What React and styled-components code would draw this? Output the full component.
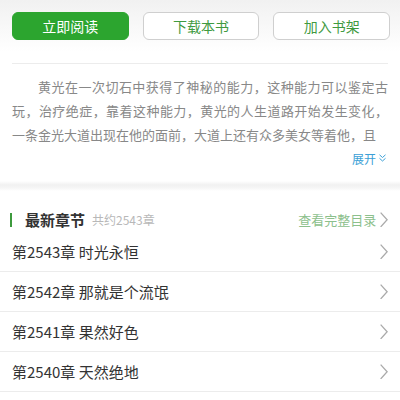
import React from "react";
import styled, { createGlobalStyle } from "styled-components";

const GlobalStyle = createGlobalStyle`
  * { box-sizing: border-box; }
  body {
    margin: 0;
    background: #fff;
    font-family: "Microsoft YaHei", "Noto Sans CJK SC", "Liberation Sans", sans-serif;
  }
`;

const Page = styled.div`
  width: 400px;
  height: 400px;
  overflow: hidden;
  background: #fff;
`;

const Top = styled.div`
  background: linear-gradient(#f1f1f1, #fff 52px);
  padding: 12px 12px 0 12px;
`;

const ButtonRow = styled.div`
  display: flex;
  gap: 14px;
  margin-right: -2px;
`;

const ActionButton = styled.div`
  flex: 1;
  height: 28px;
  display: flex;
  align-items: center;
  justify-content: center;
  border-radius: 6px;
  font-size: 14px;
  color: ${(p) => (p.primary ? "#fff" : "#3f9a3f")};
  background: ${(p) => (p.primary ? "#2ca52f" : "#fff")};
  border: 1px solid ${(p) => (p.primary ? "#2ca52f" : "#cfcfcf")};
`;

const Intro = styled.div`
  margin-top: 23px;
  border-top: 1px solid #ececec;
  padding-top: 11px;
`;

const Desc = styled.p`
  margin: 0;
  font-size: 13px;
  line-height: 24px;
  color: #888;
  text-indent: 2em;
  text-align: justify;
`;

const More = styled.div`
  display: flex;
  justify-content: flex-end;
  align-items: center;
  gap: 3px;
  height: 22px;
  font-size: 12px;
  color: #3b9fd6;
  padding-right: 2px;
`;

const Gap = styled.div`
  height: 10px;
  margin-top: 12px;
  background: linear-gradient(#fff, #f1f1f1 40%, #f6f6f6 70%, #fff);
`;

const Header = styled.div`
  display: flex;
  align-items: center;
  height: 41px;
  padding: 16px 12px 0 10px;
`;

const Bar = styled.span`
  width: 2px;
  height: 14px;
  background: #3d9a3d;
  margin-right: 13px;
`;

const Title = styled.span`
  font-size: 15px;
  font-weight: bold;
  color: #333;
`;

const Count = styled.span`
  font-size: 12px;
  color: #b8b8b8;
  margin-left: 7px;
`;

const Catalog = styled.span`
  margin-left: auto;
  display: flex;
  align-items: center;
  gap: 4px;
  font-size: 13px;
  color: #8cc08c;
`;

const List = styled.div``;

const Row = styled.div`
  display: flex;
  align-items: center;
  justify-content: space-between;
  height: 40px;
  padding: 0 12px;
  border-bottom: 1px solid #ececec;
  font-size: 15px;
  color: #333;
`;

const Chevron = ({ color = "#aaa", size = 10 }) => (
  <svg width={size * 0.6} height={size * 1.2} viewBox="0 0 6 12">
    <path d="M0.5 0.5 L5.5 6 L0.5 11.5" fill="none" stroke={color} strokeWidth="1" />
  </svg>
);

const DoubleDown = () => (
  <svg width="7" height="8" viewBox="0 0 7 8">
    <path d="M0.5 0.8 L3.5 3.5 L6.5 0.8 M0.5 4.3 L3.5 7 L6.5 4.3" fill="none" stroke="#3b9fd6" strokeWidth="1" />
  </svg>
);

const chapters = [
  "第2543章 时光永恒",
  "第2542章 那就是个流氓",
  "第2541章 果然好色",
  "第2540章 天然绝地",
];

export default function App() {
  return (
    <Page>
      <GlobalStyle />
      <Top>
        <ButtonRow>
          <ActionButton primary>立即阅读</ActionButton>
          <ActionButton>下载本书</ActionButton>
          <ActionButton>加入书架</ActionButton>
        </ButtonRow>
        <Intro>
          <Desc>
            黄光在一次切石中获得了神秘的能力，这种能力可以鉴定古玩，治疗绝症，靠着这种能力，黄光的人生道路开始发生变化，一条金光大道出现在他的面前，大道上还有众多美女等着他，且
          </Desc>
          <More>
            展开 <DoubleDown />
          </More>
        </Intro>
      </Top>
      <Gap />
      <Header>
        <Bar />
        <Title>最新章节</Title>
        <Count>共约2543章</Count>
        <Catalog>
          查看完整目录 <Chevron color="#aaa" size={13} />
        </Catalog>
      </Header>
      <List>
        {chapters.map((c) => (
          <Row key={c}>
            {c}
            <Chevron size={13} />
          </Row>
        ))}
      </List>
    </Page>
  );
}
